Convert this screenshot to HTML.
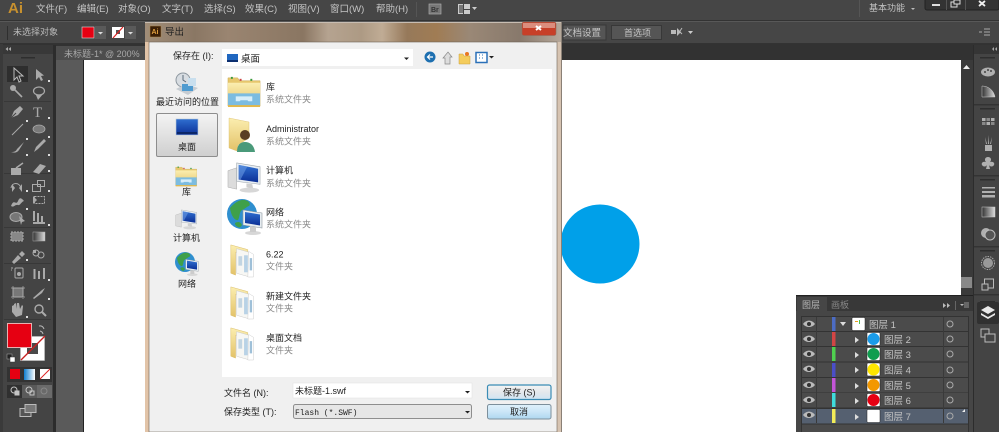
<!DOCTYPE html>
<html><head><meta charset="utf-8"><style>
html,body{margin:0;padding:0;background:#464646;overflow:hidden}
svg{display:block;position:absolute;left:0;top:0;filter:blur(.35px)}
text{font-family:"Liberation Sans","Noto Sans CJK SC",sans-serif}
.m{font-size:9.5px;fill:#c4c4c4}
.d{font-size:9px;fill:#222}
.s{font-size:9px;fill:#8a8a8a}
.l{font-size:9px;fill:#bbb}
</style></head><body>
<svg width="999" height="432" viewBox="0 0 999 432" xmlns="http://www.w3.org/2000/svg">
<defs>
<linearGradient id="title" x1="0" x2="1" y1="0" y2="0">
<stop offset="0" stop-color="#a08d78"/><stop offset=".12" stop-color="#8a7764"/><stop offset=".2" stop-color="#9a8571"/><stop offset=".38" stop-color="#8a7662"/><stop offset=".44" stop-color="#b5a390"/><stop offset=".52" stop-color="#ad9a84"/><stop offset=".57" stop-color="#c0ac95"/><stop offset=".63" stop-color="#96795a"/><stop offset=".7" stop-color="#a07c54"/><stop offset=".78" stop-color="#9a8876"/><stop offset=".9" stop-color="#88796c"/><stop offset="1" stop-color="#b5a89b"/>
</linearGradient>
<linearGradient id="fold" x1="0" x2="0" y1="0" y2="1"><stop offset="0" stop-color="#fbeeb0"/><stop offset="1" stop-color="#e3c268"/></linearGradient>
<linearGradient id="blue" x1="0" x2="0" y1="0" y2="1"><stop offset="0" stop-color="#2f6fd0"/><stop offset="1" stop-color="#0b2f96"/></linearGradient>
<linearGradient id="btn" x1="0" x2="0" y1="0" y2="1"><stop offset="0" stop-color="#f4f4f4"/><stop offset=".5" stop-color="#e4e8ec"/><stop offset="1" stop-color="#cfe4f3"/></linearGradient>
<linearGradient id="btn2" x1="0" x2="0" y1="0" y2="1"><stop offset="0" stop-color="#dff1fb"/><stop offset=".5" stop-color="#cbe6f7"/><stop offset="1" stop-color="#aed7f0"/></linearGradient>
<linearGradient id="sel" x1="0" x2="0" y1="0" y2="1"><stop offset="0" stop-color="#f4f4f4"/><stop offset="1" stop-color="#cfcfcf"/></linearGradient>
<linearGradient id="grad" x1="0" x2="1" y1="0" y2="0"><stop offset="0" stop-color="#333"/><stop offset="1" stop-color="#ddd"/></linearGradient>
<linearGradient id="gblue" x1="0" x2="1" y1="0" y2="0"><stop offset="0" stop-color="#0f7fd0"/><stop offset="1" stop-color="#fff"/></linearGradient>
<symbol id="lib" viewBox="0 0 36 36" overflow="visible">
<path d="M1 5h10l2 3h21v26H1z" fill="#e7c76d" stroke="#c9a850" stroke-width=".5"/>
<path d="M1 10h33v24H1z" fill="url(#fold)"/>
<rect x="4" y="4" width="2" height="2" fill="#3a9a3a"/><rect x="13" y="6" width="2" height="2" fill="#c44"/><rect x="24" y="6" width="2" height="2" fill="#3a9a3a"/>
<path d="M1 21h33v13H1z" fill="#7cbce0"/><path d="M9 24h17v5h-4l-1-1h-7l-1 1H9z" fill="#d7eefa"/><rect x="1" y="33" width="33" height="2" fill="#e4b84a"/>
</symbol>
<symbol id="doc" viewBox="0 0 36 36" overflow="visible">
<path d="M3 2l18 5v3l-13 0v24L3 32z" fill="url(#fold)" stroke="#d9bb68" stroke-width=".5"/>
<path d="M9 6l14 4v26L9 32z" fill="#f7f7f4" stroke="#c9c9c9" stroke-width=".5"/>
<rect x="11" y="14" width="4" height="10" fill="#c2d5e2"/><rect x="17" y="13" width="4" height="18" fill="#b8d2e6"/>
<path d="M22 9l5 3v24h-6z" fill="#fff" stroke="#ccc" stroke-width=".5"/>
<rect x="23" y="16" width="2.5" height="13" fill="#9fc0d8"/>
</symbol>
<symbol id="pc" viewBox="0 0 36 36" overflow="visible">
<path d="M1 11l9-3v22l-9-2z" fill="#dcdcdc" stroke="#aaa" stroke-width=".5"/>
<path d="M10 3l24 4v18l-24-3z" fill="#e9eef2" stroke="#9da6ad" stroke-width=".6"/>
<path d="M12 5l20 4v14l-20-3z" fill="url(#blue)"/>
<path d="M12 5l9 1.6L14 20l-2-.3z" fill="#6f9fe6" opacity=".55"/>
<path d="M20 24l6 1 1 5-7-2z" fill="#cfcfcf"/><ellipse cx="23" cy="31" rx="10" ry="2.5" fill="#d7d7d7"/>
</symbol>
<symbol id="net" viewBox="0 0 36 36" overflow="visible">
<circle cx="15" cy="15" r="15" fill="#2f8fcf"/>
<path d="M3 9c4-5 10-9 15-8 4 1 6 4 4 6-3 1-4 3-7 4-3 2-2 7-4 10-3 1-7-4-8-12z" fill="#3fa04a"/>
<path d="M8 24c3-2 6-1 7 2-1 2-3 3-4 2-2-1-3-2-3-4z" fill="#3fa04a"/>
<path d="M16 11l19 3v15l-19-3z" fill="#e6ecf0" stroke="#8f989f" stroke-width=".6"/>
<path d="M18 13l15 2.500v11l-15-2.500z" fill="url(#blue)"/>
<ellipse cx="26" cy="34" rx="8" ry="2" fill="#d7d7d7"/><rect x="23" y="28" width="6" height="5" fill="#ccc"/>
</symbol>
<symbol id="eye" viewBox="0 0 12 8" overflow="visible"><path d="M0 4c3-4.500 9-4.500 12 0-3 4-9 4-12 0z" fill="#bbb"/><circle cx="6" cy="4" r="2" fill="#333"/></symbol>
</defs>

<!-- app chrome -->
<rect width="999" height="432" fill="#464646"/>
<rect y="20" width="999" height="1" fill="#333"/>
<rect y="21" width="999" height="1" fill="#585858"/>
<rect y="43" width="999" height="1" fill="#333"/>
<rect y="44" width="999" height="16" fill="#323232"/>
<rect x="56" y="60" width="28" height="372" fill="#5a5a5a"/>
<rect x="53" y="45" width="3" height="387" fill="#2c2c2c"/>
<rect x="0" y="44" width="3" height="388" fill="#3a3a3a"/>
<rect x="56" y="46" width="90" height="14" fill="#4d4d4d"/>
<rect x="83" y="60" width="1" height="372" fill="#222"/>
<rect x="84" y="60" width="877" height="372" fill="#fff"/>

<!-- menu -->
<text x="8" y="13" font-size="15" font-weight="bold" fill="#c8912f">Ai</text>
<text class="m" x="36" y="12">文件(F)</text>
<text class="m" x="77" y="12">编辑(E)</text>
<text class="m" x="118" y="12">对象(O)</text>
<text class="m" x="162" y="12">文字(T)</text>
<text class="m" x="204" y="12">选择(S)</text>
<text class="m" x="245" y="12">效果(C)</text>
<text class="m" x="288" y="12">视图(V)</text>
<text class="m" x="330" y="12">窗口(W)</text>
<text class="m" x="376" y="12">帮助(H)</text>
<rect x="416" y="2" width="1" height="15" fill="#555"/>
<rect x="429" y="4" width="12" height="10" fill="#777" stroke="#aaa" stroke-width=".7"/>
<text x="431" y="12" font-size="7" fill="#333" font-weight="bold">Br</text>
<rect x="458" y="4" width="12" height="10" fill="#ccc"/><rect x="463" y="4" width="1" height="10" fill="#444"/><rect x="464" y="9" width="6" height="1" fill="#444"/><rect x="459" y="5" width="4" height="8" fill="#777"/>
<path d="M472 7h5l-2.500 3z" fill="#ccc"/>
<rect x="859" y="0" width="1" height="17" fill="#555"/>
<text class="m" x="869" y="11" style="font-size:9px">基本功能</text>
<path d="M911 8h4l-2 2z" fill="#bbb"/>
<rect x="925" y="-2" width="74" height="12" rx="2" fill="#333" stroke="#222"/>
<rect x="946" y="0" width="1" height="10" fill="#555"/><rect x="965" y="0" width="1" height="10" fill="#555"/>
<rect x="932" y="4" width="8" height="2" fill="#ddd"/>
<rect x="951" y="2" width="6" height="5" fill="none" stroke="#ddd"/><rect x="954" y="0" width="6" height="4" fill="#333" stroke="#ddd"/>
<path d="M979 1l6 5m0-5l-6 5" stroke="#eee" stroke-width="1.800"/>

<!-- control bar -->
<rect x="7" y="26" width="1" height="14" fill="#2f2f2f"/>
<text x="13" y="35" font-size="9" fill="#bbb">未选择对象</text>
<rect x="82" y="27" width="12" height="11" fill="#e60012" stroke="#ddd" stroke-width=".6"/>
<rect x="95" y="26" width="11" height="13" fill="#5a5a5a"/><path d="M98 32h5l-2.500 2.500z" fill="#ddd"/>
<rect x="112" y="27" width="12" height="11" fill="#fff"/><rect x="116" y="30" width="4" height="4" fill="#555"/><path d="M113 38l10-11" stroke="#d22" stroke-width="1.200"/>
<rect x="125" y="26" width="11" height="13" fill="#5a5a5a"/><path d="M128 32h5l-2.500 2.500z" fill="#ddd"/>
<rect x="563" y="25" width="43" height="15" fill="#555" stroke="#383838"/>
<text x="563" y="36" font-size="9.500" fill="#c4c4c4">文档设置</text>
<rect x="611.500" y="25.500" width="50" height="14" fill="#555" stroke="#383838"/>
<text x="624" y="36" font-size="9" fill="#c4c4c4">首选项</text>
<path d="M671 30h5v4h-5zM677 28l4 4-4 4z" fill="#bbb"/><path d="M682 28l-2 3m2 3l-2-2" stroke="#bbb"/>
<path d="M688 31h5l-2.500 3z" fill="#ccc"/>
<path d="M979 32h3m2-3h6m-6 3h6m-6 3h6" stroke="#aaa" fill="none"/>

<!-- tab -->
<text x="64" y="57" font-size="9" fill="#a8a8a8">未标题-1* @ 200%</text>

<!-- toolbar -->
<rect x="3" y="45" width="50" height="387" fill="#444"/>
<rect x="3" y="45" width="50" height="9" fill="#383838"/>
<path d="M8 47l-2.500 2 2.500 2zM11 47l-2.500 2 2.500 2z" fill="#aaa"/>
<rect x="21" y="57" width="14" height="1.500" fill="#2e2e2e"/>
<rect x="7" y="66" width="21" height="16" fill="#2e2e2e"/>
<rect x="4" y="101" width="47" height="1" fill="#383838"/>
<rect x="4" y="173" width="47" height="1" fill="#383838"/>
<rect x="4" y="227" width="47" height="1" fill="#383838"/>
<rect x="4" y="263" width="47" height="1" fill="#383838"/>
<rect x="4" y="319" width="47" height="1" fill="#383838"/>
<g fill="#aaa" stroke="#aaa">
<path d="M14 68l0 12 3-3 2 5 2-1-2-5 4 0z" fill="none" stroke="#bbb"/>
<path d="M36 69v11l3-3 2 4 2-1-2-4 3-.5z" stroke="none"/>
<path d="M11 86l11 11" stroke-width="1.600"/><circle cx="13" cy="88" r="3" stroke="none"/>
<ellipse cx="39" cy="91" rx="5.500" ry="4" fill="none" stroke-width="1.200"/><path d="M36 95l2 5 5-6z" stroke="none"/>
<path d="M11 118l3-7 6-5 3 3-5 6z" stroke="none"/><path d="M11 118l5-5" stroke="#444"/>
<text x="33" y="117" style="font-family:'Liberation Serif',serif" font-size="15" stroke="none">T</text>
<path d="M12 135l11-11" stroke-width="1"/>
<ellipse cx="39" cy="129" rx="6" ry="4" fill="#7a7a7a" stroke-width=".8"/>
<path d="M11 152c4 0 5-1 6-3l7-7-5 8c-2 3-5 3-8 2z" stroke="none"/>
<path d="M34 152l2-5 8-8 2 2-8 8z" stroke="none"/>
<path d="M11 168h10v7H11z" stroke="none"/><path d="M16 168l7-5" stroke-width="1.500"/>
<path d="M33 172l7-8 6 2-7 8z" stroke="none"/>
<path d="M11 188c1-6 8-6 10 0" fill="none"/><path d="M12 184v8l3-4zM22 184v8l-3-4z" stroke="none"/>
<rect x="32.500" y="184.500" width="8" height="7" fill="none"/><rect x="37.500" y="180.500" width="7" height="6" fill="none"/>
<path d="M11 206c3-8 5 0 7-5s4-2 6 0c-3 1-4 5-6 4-3-1-4 3-7 1z" stroke="none"/>
<rect x="34.500" y="196.500" width="10" height="7" fill="none" stroke-dasharray="2 1"/><path d="M33 196l4 4-4 4z" stroke="none"/>
<ellipse cx="16" cy="217" rx="6" ry="4.500" fill="#777"/><path d="M19 216l6 5-3 1-1 3z" stroke="none"/>
<path d="M33 211h2v10h-2zM37 213h2v9h-2zM41 216h2v6h-2zM33 222h12v2H33z" stroke="none"/>
<rect x="11" y="232" width="12" height="9" fill="#888" stroke-dasharray="2 1"/>
<rect x="33" y="232" width="12" height="9" fill="url(#grad)" stroke-width=".5"/>
<path d="M12 262l6-7 3 3-7 6zM19 254l3-3 3 3-3 3z" stroke="none"/>
<circle cx="41" cy="255" r="3" fill="none"/><circle cx="36" cy="253" r="3" fill="none"/><rect x="33" y="250" width="3" height="3" stroke="none"/>
<rect x="15" y="268" width="8" height="10" rx="1" fill="none"/><circle cx="19" cy="274" r="2" stroke="none"/><path d="M11 268h2m-2 2h1"/>
<path d="M33.500 279v-10h2v10zM38 279v-8h2v8zM43 279v-11h2v11zM33 280h13" stroke="none"/>
<rect x="13" y="288" width="10" height="9" fill="#777"/><path d="M11 288h14M11 297h14M13 286v13M23 286v13" stroke-dasharray="2 2" stroke-width=".7"/>
<path d="M33 298l9-8 3-2-3 5-8 6z" stroke="none"/>
<path d="M12 312v-6l2-1v4-5l2-1 1 6v-6l2 0 1 6 2-4 1 1-1 9-6 2z" stroke="none"/>
<circle cx="39" cy="309" r="4" fill="none" stroke-width="1.400"/><path d="M42 312l4 4" stroke-width="2"/>
</g>
<path fill="#ddd" d="M48 80h2v2h-2zM26 120h2v2h-2zM48 117h2v2h-2zM26 138h2v2h-2zM48 136h2v2h-2zM26 154h2v2h-2zM48 154h2v2h-2zM48 170h2v2h-2zM26 190h2v2h-2zM48 190h2v2h-2zM26 208h2v2h-2zM48 224h2v2h-2zM26 259h2v2h-2zM48 279h2v2h-2zM48 298h2v2h-2zM26 316h2v2h-2z"/>
<!-- fill/stroke -->
<rect x="20.500" y="336.500" width="24" height="24" fill="#fff" stroke="#ccc" stroke-width=".5"/>
<rect x="27" y="343" width="11" height="11" fill="#4a4a4a"/>
<path d="M21 360l24-24" stroke="#c82020" stroke-width="1.300"/>
<rect x="7.500" y="323.500" width="24" height="24" fill="#e60012" stroke="#e8b0b0"/>
<path d="M39 326a4 4 0 0 1 5 3M40 331a4 4 0 0 1 3 3" stroke="#bbb" fill="none"/>
<rect x="7" y="354" width="5" height="5" fill="#222" stroke="#aaa" stroke-width=".5"/><rect x="10" y="357" width="5" height="5" fill="#fff" stroke="#333" stroke-width=".5"/>
<rect x="7" y="367" width="45" height="15" fill="#333"/>
<rect x="10" y="369" width="10" height="10" fill="#e60012"/>
<rect x="24" y="369" width="11" height="11" fill="url(#gblue)"/>
<rect x="40" y="369" width="10" height="10" fill="#fff"/><path d="M40 379l10-10" stroke="#d22"/>
<rect x="7" y="385" width="45" height="13" fill="#5a5a5a"/>
<rect x="7" y="385" width="15" height="13" fill="#303030"/>
<rect x="37" y="385" width="15" height="13" fill="#6a6a6a"/>
<g fill="none" stroke="#c4c4c4"><circle cx="14" cy="390" r="3"/><rect x="15" y="391" width="4" height="4" fill="#c4c4c4"/><circle cx="29" cy="390" r="3"/><rect x="30" y="391" width="4" height="4"/><circle cx="44" cy="391" r="3" stroke="#888"/></g>
<g fill="#555" stroke="#bbb"><rect x="20" y="408.500" width="11" height="8"/><rect x="25" y="404.500" width="11" height="8" fill="#777"/></g>

<!-- artwork -->
<circle cx="600" cy="244" r="39.500" fill="#00a0e9"/>

<!-- v scrollbar -->
<rect x="961" y="60" width="12" height="372" fill="#3a3a3a"/>
<path d="M963 69h7l-3.500-4z" fill="#eee"/>
<rect x="961" y="277" width="11" height="11" fill="#888"/>

<!-- right dock -->
<rect x="973" y="45" width="26" height="387" fill="#444"/>
<rect x="973" y="45" width="1" height="387" fill="#2c2c2c"/>
<rect x="974" y="45" width="25" height="9" fill="#353535"/>
<path d="M994 47l-2 2 2 2zM997 47l-2 2 2 2z" fill="#aaa"/>
<g fill="#333"><rect x="974" y="104" width="25" height="1.500"/><rect x="974" y="175" width="25" height="1.500"/><rect x="974" y="246" width="25" height="1.500"/><rect x="974" y="294" width="25" height="1.500"/></g>
<g fill="#2e2e2e"><rect x="980" y="57" width="15" height="1.500"/><rect x="980" y="108" width="15" height="1.500"/><rect x="980" y="179" width="15" height="1.500"/><rect x="980" y="250" width="15" height="1.500"/><rect x="980" y="301" width="15" height="1.500"/></g>
<g fill="#b0b0b0">
<ellipse cx="988" cy="72" rx="7" ry="4.500"/><g fill="#444"><circle cx="985" cy="72" r="1"/><circle cx="988" cy="70" r="1"/><circle cx="991" cy="71" r="1"/></g>
<path d="M982 86c7 0 12 5 13 11h-13z" fill="url(#grad)" stroke="#ccc" stroke-width=".5"/>
<rect x="982" y="118" width="3.500" height="3"/><rect x="986.500" y="118" width="3.500" height="3" fill="#888"/><rect x="991" y="118" width="3.500" height="3"/><rect x="982" y="122" width="3.500" height="3" fill="#888"/><rect x="986.500" y="122" width="3.500" height="3"/><rect x="991" y="122" width="3.500" height="3" fill="#888"/>
<path d="M985 145h7v6h-7zM985 137l2 7h-1zM988 135l1 9h-1zM992 137l-1 7h-1z"/>
<path d="M988 157c3 0 4 3 2 5 3-1 5 1 4 3s-4 2-5 0l1 4h-4l1-4c-1 2-4 2-5 0s1-4 4-3c-2-2-1-5 2-5z"/>
<rect x="982" y="187" width="13" height="1.500"/><rect x="982" y="191" width="13" height="2"/><rect x="982" y="195" width="13" height="2.500"/>
<rect x="982" y="207" width="13" height="10" fill="url(#grad)" stroke="#ccc" stroke-width=".5"/>
<circle cx="986" cy="233" r="5"/><circle cx="990" cy="235" r="5" fill="#555" stroke="#bbb"/>
<circle cx="988" cy="263" r="5" fill="#999"/><circle cx="988" cy="263" r="6.500" fill="none" stroke="#aaa" stroke-dasharray="1.500 1"/>
<rect x="984.500" y="279" width="9" height="9" fill="none" stroke="#bbb"/><rect x="982" y="284" width="6" height="6" fill="#444" stroke="#bbb"/>
<rect x="977" y="302" width="22" height="22" rx="2" fill="#303030"/>
<path d="M988 306l7 4-7 4-7-4z" fill="#e8e8e8"/><path d="M981 313l7 4 7-4v2l-7 4-7-4z" fill="#e8e8e8"/>
<rect x="981" y="329" width="8" height="8" fill="none" stroke="#bbb"/><rect x="985" y="334" width="10" height="8" fill="#444" stroke="#bbb"/>
</g>

<!-- layers panel -->
<rect x="796" y="295" width="177" height="137" fill="#464646"/>
<rect x="796" y="295" width="177" height="1.500" fill="#222"/>
<rect x="796" y="296" width="177" height="15" fill="#383838"/>
<rect x="797" y="297" width="30" height="15" fill="#464646"/>
<text x="802" y="308" font-size="9" fill="#b5b5b5">图层</text>
<text x="831" y="308" font-size="9" fill="#888">画板</text>
<path d="M943 303l3 2.500-3 2.500zM947 303l3 2.500-3 2.500z" fill="#bbb"/><rect x="955" y="301" width="1" height="9" fill="#666"/>
<path d="M960 304h4l-2 2z" fill="#bbb"/><rect x="964" y="302" width="5" height="6" fill="#666"/>
<rect x="801" y="316" width="168" height="116" fill="#333"/>
<g fill="#4b4b4b">
<rect x="802" y="317" width="166" height="14"/><rect x="802" y="332" width="166" height="14"/><rect x="802" y="347" width="166" height="14.500"/><rect x="802" y="362.500" width="166" height="14.500"/><rect x="802" y="378" width="166" height="14.500"/><rect x="802" y="393" width="166" height="14.500"/>
<rect x="802" y="424.500" width="166" height="8"/>
</g>
<rect x="802" y="409" width="166" height="14.500" fill="#556070"/>
<g fill="#3a3a3a"><rect x="816" y="317" width="1" height="106"/><rect x="943" y="317" width="1" height="106"/></g>
<use href="#eye" x="803" y="320" width="12" height="8"/><use href="#eye" x="803" y="335" width="12" height="8"/><use href="#eye" x="803" y="350" width="12" height="8"/><use href="#eye" x="803" y="365" width="12" height="8"/><use href="#eye" x="803" y="381" width="12" height="8"/><use href="#eye" x="803" y="396" width="12" height="8"/><use href="#eye" x="803" y="411" width="12" height="8"/>
<rect x="832" y="317" width="3.500" height="14" fill="#4c6cc4"/>
<rect x="832" y="332" width="3.500" height="14" fill="#d24545"/>
<rect x="832" y="347" width="3.500" height="14" fill="#4fd04f"/>
<rect x="832" y="363" width="3.500" height="14" fill="#4a4fc8"/>
<rect x="832" y="378" width="3.500" height="14" fill="#c455d8"/>
<rect x="832" y="393" width="3.500" height="14" fill="#3fdcdc"/>
<rect x="832" y="409" width="3.500" height="14" fill="#f2ec58"/>
<path d="M840 322h6l-3 4z" fill="#ddd"/>
<path fill="#ddd" d="M855 337v6l4-3zM855 352v6l4-3zM855 367v6l4-3zM855 383v6l4-3zM855 398v6l4-3zM855 414v6l4-3z"/>
<rect x="852" y="317.500" width="13" height="13" rx="1" fill="#fff" stroke="#222" stroke-width=".5"/><rect x="855" y="321" width="3" height="1" fill="#e8a020"/><rect x="859" y="320" width="1" height="4" fill="#50c050"/>
<g stroke="#222" stroke-width=".5" fill="#fff"><rect x="867" y="332.500" width="13" height="13" rx="1"/><rect x="867" y="347.500" width="13" height="13" rx="1"/><rect x="867" y="363" width="13" height="13" rx="1"/><rect x="867" y="378.500" width="13" height="13" rx="1"/><rect x="867" y="393.500" width="13" height="13" rx="1"/><rect x="867" y="409.500" width="13" height="13" rx="1"/></g>
<circle cx="873.500" cy="339" r="6" fill="#1a9be8"/><circle cx="873.500" cy="354" r="6" fill="#0f9d4f"/><circle cx="873.500" cy="369.500" r="6" fill="#ffe600"/><circle cx="873.500" cy="385" r="6" fill="#f39800"/><circle cx="873.500" cy="400" r="6" fill="#e60012"/>
<g font-size="9.500" fill="#c4c4c4">
<text x="869" y="328">图层 1</text><text x="884" y="343">图层 2</text><text x="884" y="358">图层 3</text><text x="884" y="373.500">图层 4</text><text x="884" y="389">图层 5</text><text x="884" y="404">图层 6</text><text x="884" y="420">图层 7</text>
</g>
<g fill="none" stroke="#aaa"><circle cx="950" cy="324" r="3"/><circle cx="950" cy="339" r="3"/><circle cx="950" cy="354" r="3"/><circle cx="950" cy="370" r="3"/><circle cx="950" cy="385" r="3"/><circle cx="950" cy="400" r="3"/><circle cx="950" cy="416" r="3"/></g>
<path d="M965 409v3h-3z" fill="#eee"/>

<!-- dialog -->
<rect x="145" y="22" width="416.500" height="410" rx="3" fill="#dcc8b4"/>
<rect x="145" y="22" width="416" height="20" fill="url(#title)"/>
<rect x="145" y="42" width="4" height="390" fill="#e2c4a8"/>
<rect x="557" y="42" width="4" height="390" fill="#d6c3b1"/>
<rect x="145" y="22" width="416" height="1" fill="#c8bdb2"/>
<rect x="561" y="22" width="1" height="410" fill="#8a8076"/>
<rect x="149" y="42" width="408" height="390" fill="#f0f0f0" stroke="#6e6357" stroke-width=".6"/>
<rect x="522" y="22" width="34" height="13.500" rx="2" fill="#c73f28" stroke="#8f6a5c" stroke-width=".6"/>
<rect x="523" y="23" width="32" height="5" fill="#db8d7d"/>
<path d="M536 26l5 4m0-4l-5 4" stroke="#fff" stroke-width="2"/>
<rect x="150" y="26" width="11" height="11" fill="#3a1e06" stroke="#b08a50" stroke-width=".5"/>
<text x="151.500" y="34" font-size="7" font-weight="bold" fill="#e0a040">Ai</text>
<text x="165" y="35" font-size="9.500" fill="#222">导出</text>

<text class="d" x="173" y="59">保存在 (I):</text>
<rect x="222" y="49" width="191" height="17" fill="#fff"/>
<rect x="227" y="54" width="11" height="8" fill="#2067c0"/><rect x="227" y="60" width="11" height="2" fill="#0c2f70"/>
<text x="241" y="62" font-size="9.500" fill="#222">桌面</text>
<path d="M404 57.500h5l-2.500 2.500z" fill="#222"/>
<circle cx="430" cy="57" r="5.500" fill="#1d6fb0"/><path d="M433 57h-5m2-2.500L427.500 57l2.500 2.500" stroke="#fff" stroke-width="1.200" fill="none"/>
<path d="M445 64v-6l-2 0 5-6 4 5-2 0v7z" fill="#ddd" stroke="#888" stroke-width=".7"/>
<path d="M459 54h4l1 2h6v8h-11z" fill="#f4cc5c" stroke="#c9a040" stroke-width=".5"/><circle cx="467" cy="54" r="2" fill="#e87820"/>
<rect x="476" y="52.500" width="11" height="10" fill="#fff" stroke="#2a70b8" stroke-width="1.500"/><path d="M479 55h1m2 0h1m-4 3h1m2 0h1" stroke="#2a70b8"/>
<path d="M489 56h5l-2.500 2.500z" fill="#222"/>

<!-- sidebar -->
<rect x="150" y="69" width="72" height="362" fill="#f0f0f0"/>
<circle cx="183" cy="80" r="7" fill="#d8dde2" stroke="#8d979f"/>
<path d="M183 75v5l3 2" stroke="#5a6a7a" fill="none"/>
<path d="M176 89l10-5 12 4-10 7z" fill="#c6ccd2"/><rect x="182" y="84" width="11" height="7" fill="#4f9bd0"/>
<rect x="188" y="78" width="8" height="8" fill="#c9dfee"/>
<text class="d" x="156" y="105">最近访问的位置</text>
<rect x="156.500" y="113.500" width="61" height="43" rx="1.500" fill="url(#sel)" stroke="#8d8d8d"/>
<rect x="176" y="119" width="22" height="16" fill="url(#blue)" stroke="#b8c8d8" stroke-width=".6"/>
<rect x="177" y="132" width="20" height="2" fill="#0b2668"/>
<text class="d" x="178" y="150">桌面</text>
<use href="#lib" x="175" y="164" width="23" height="23"/>
<text class="d" x="182" y="195">库</text>
<use href="#pc" x="175" y="208" width="23" height="23"/>
<text class="d" x="173" y="241">计算机</text>
<use href="#net" x="175" y="252" width="24" height="24"/>
<text class="d" x="178" y="287">网络</text>

<!-- file list -->
<rect x="222" y="69" width="330" height="308" fill="#fff"/>
<use href="#lib" x="227" y="73" width="35" height="35"/>
<text class="d" x="266" y="90">库</text><text class="s" x="266" y="102.500">系统文件夹</text>
<path d="M229 118l20 4v16l-11 7-1 6-8-3z" fill="url(#fold)" stroke="#d9bb68" stroke-width=".4"/>
<path d="M237 152c0-7 3-10 8-10s9 3 10 10z" fill="#4a9a7a"/>
<circle cx="245" cy="135" r="5" fill="#5a3e24"/>
<text class="d" x="266" y="132">Administrator</text><text class="s" x="266" y="144.500">系统文件夹</text>
<use href="#pc" x="227" y="160" width="35" height="35"/>
<text class="d" x="266" y="173.500">计算机</text><text class="s" x="266" y="186.500">系统文件夹</text>
<use href="#net" x="227" y="199" width="36" height="36"/>
<text class="d" x="266" y="215.500">网络</text><text class="s" x="266" y="227.500">系统文件夹</text>
<use href="#doc" x="228" y="242" width="34" height="36"/>
<text class="d" x="266" y="257.500">6.22</text><text class="s" x="266" y="269.500">文件夹</text>
<use href="#doc" x="228" y="284" width="34" height="36"/>
<text class="d" x="266" y="299.500">新建文件夹</text><text class="s" x="266" y="311.500">文件夹</text>
<use href="#doc" x="228" y="325" width="34" height="36"/>
<text class="d" x="266" y="341">桌面文档</text><text class="s" x="266" y="353.500">文件夹</text>

<!-- bottom form -->
<text class="d" x="224" y="396">文件名 (N):</text>
<rect x="293" y="383" width="179" height="15" fill="#fff" stroke="#e4e4e4" stroke-width=".6"/>
<text class="d" x="295" y="394">未标题-1.swf</text>
<path d="M465 391h5l-2.500 2.500z" fill="#222"/>
<text class="d" x="224" y="415">保存类型 (T):</text>
<rect x="293.500" y="404.500" width="178" height="14" rx="2" fill="#e6e6e6" stroke="#8e8e8e"/>
<text x="295" y="415" font-size="8" style="font-family:'Liberation Mono',monospace" fill="#222">Flash (*.SWF)</text>
<path d="M465 411h5l-2.500 2.500z" fill="#222"/>
<rect x="487.500" y="385" width="63.500" height="14.500" rx="2" fill="url(#btn)" stroke="#3a8cb5" stroke-width="1.200"/>
<text class="d" x="503" y="395.500">保存 (S)</text>
<rect x="487.500" y="404.500" width="63.500" height="14.500" rx="2" fill="url(#btn2)" stroke="#7d8f9b"/>
<text class="d" x="510" y="415">取消</text>
</svg>
</body></html>
